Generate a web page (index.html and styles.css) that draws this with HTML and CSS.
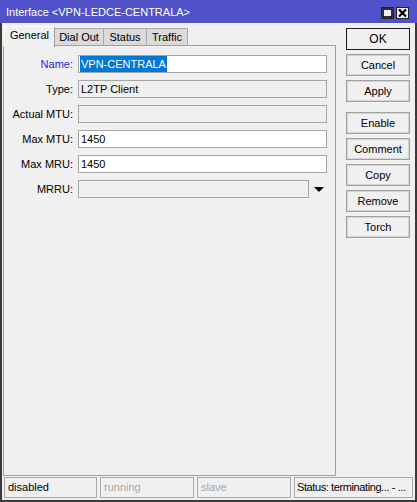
FILE: index.html
```html
<!DOCTYPE html>
<html>
<head>
<meta charset="utf-8">
<link rel="stylesheet" href="styles.css">
</head>
<body>
<div class="window">
  <div class="titlebar">
    <span class="title">Interface &lt;VPN-LEDCE-CENTRALA&gt;</span>
    <div class="tb-btns">
      <span class="tb-btn"><svg width="11" height="10" viewBox="0 0 11 10"><rect x="1" y="1" width="9" height="8" fill="none" stroke="#000" stroke-width="1.6"/></svg></span>
      <span class="tb-btn"><svg width="11" height="10" viewBox="0 0 11 10"><path d="M2 1.5 L9 8.5 M9 1.5 L2 8.5" stroke="#000" stroke-width="2.2"/></svg></span>
    </div>
  </div>
  <div class="main">
    <div class="left">
      <div class="tabs">
        <div class="tab active w-general">General</div>
        <div class="tab w-dial">Dial Out</div>
        <div class="tab w-status">Status</div>
        <div class="tab w-traffic">Traffic</div>
        <div class="tab-fill"></div>
      </div>
      <div class="panel">
        <div class="row">
          <div class="label blue">Name:</div>
          <div class="field white"><span class="sel">VPN-CENTRALA</span></div>
        </div>
        <div class="row">
          <div class="label">Type:</div>
          <div class="field">L2TP Client</div>
        </div>
        <div class="row">
          <div class="label">Actual MTU:</div>
          <div class="field"></div>
        </div>
        <div class="row">
          <div class="label">Max MTU:</div>
          <div class="field white">1450</div>
        </div>
        <div class="row">
          <div class="label">Max MRU:</div>
          <div class="field white">1450</div>
        </div>
        <div class="row">
          <div class="label">MRRU:</div>
          <div class="field short"></div>
          <span class="arrow"></span>
        </div>
      </div>
    </div>
    <div class="buttons">
      <div class="btn default">OK</div>
      <div class="btn">Cancel</div>
      <div class="btn">Apply</div>
      <div class="btn sep">Enable</div>
      <div class="btn">Comment</div>
      <div class="btn">Copy</div>
      <div class="btn">Remove</div>
      <div class="btn">Torch</div>
    </div>
  </div>
  <div class="statusbar">
    <div class="seg s1">disabled</div>
    <div class="seg s2 dim">running</div>
    <div class="seg s3 dim">slave</div>
    <div class="seg s4">Status: terminating... - ...</div>
  </div>
</div>
</body>
</html>
```
FILE: styles.css
```css
* { box-sizing: border-box; }
html, body { margin: 0; padding: 0; }
body {
  font-family: "Liberation Sans", Arial, sans-serif;
  font-size: 11px;
  color: #000;
  background: #f0f0f0;
}
.window {
  width: 417px;
  height: 502px;
  border: 2px solid #3a3a3a;
  border-top: 0;
  background: #f0f0f0;
  display: flex;
  flex-direction: column;
}
.titlebar {
  height: 23px;
  margin: 0 -2px;
  background: #5151c9;
  display: flex;
  align-items: center;
  padding-left: 6px;
  padding-right: 8px;
}
.title {
  color: #fff;
  font-size: 11px;
  flex: 1;
  padding-top: 1px;
}
.tb-btns {
  display: flex;
  gap: 2px;
  margin-top: 2px;
}
.tb-btn {
  width: 13px;
  height: 12px;
  background: #f0f0f0;
  border: 1px solid #222;
  display: flex;
  align-items: center;
  justify-content: center;
}
.tb-btn svg { display: block; }
.main {
  height: 453px;
  display: flex;
  padding-top: 3px;
}
.left {
  width: 333px;
  margin-left: 1px;
  display: flex;
  flex-direction: column;
}
.tabs {
  height: 20px;
  display: flex;
  align-items: flex-end;
  padding-left: 1px;
}
.tab {
  height: 18px;
  background: #dadada;
  border: 1px solid #a8a8a8;
  border-bottom: 1px solid #a0a0a0;
  border-left: 0;
  text-align: center;
  line-height: 16px;
}
.tab.active {
  background: #f0f0f0;
  border: 1px solid #a0a0a0;
  border-left: 1px solid #fff;
  border-top: 1px solid #fff;
  border-bottom: 0;
  line-height: 17px;
  position: relative;
  z-index: 1;
  margin-bottom: -1px;
  height: 21px;
}
.w-general { width: 51px; }
.w-dial { width: 49px; }
.w-status { width: 43px; }
.w-traffic { width: 41px; }
.tab-fill {
  flex: 1;
  border-bottom: 1px solid #a0a0a0;
}
.panel {
  flex: 1;
  border: 1px solid #a0a0a0;
  border-top: 0;
  padding-top: 9px;
  display: flex;
  flex-direction: column;
  gap: 7px;
}
.row {
  display: flex;
  align-items: center;
  height: 18px;
}
.label {
  width: 69px;
  text-align: right;
  margin-right: 5px;
}
.blue { color: #2222e2; }
.field {
  width: 249px;
  height: 18px;
  border: 1px solid #a6a6a6;
  background: #f0f0f0;
  padding-left: 2px;
  line-height: 16px;
  white-space: nowrap;
  overflow: hidden;
}
.field.white { background: #fff; }
.field.short { width: 231px; }
.sel {
  background: #0078d7;
  color: #fff;
  display: inline-block;
  height: 16px;
  margin-left: -1px;
  padding: 0 1px;
}
.arrow {
  width: 0;
  height: 0;
  margin-left: 5px;
  border-left: 5px solid transparent;
  border-right: 5px solid transparent;
  border-top: 5px solid #000;
}
.buttons {
  width: 64px;
  margin-left: 10px;
  padding-top: 2px;
  display: flex;
  flex-direction: column;
  gap: 4px;
}
.btn {
  height: 22px;
  border: 1px solid #a0a0a0;
  box-shadow: inset 0 0 0 1px #d4d4d4;
  background: #f0f0f0;
  text-align: center;
  line-height: 20px;
  font-size: 11px;
}
.btn.default {
  border: 1px solid #1a1a1a;
  box-shadow: inset 0 0 0 1px #f0f0f0;
  font-size: 12px;
}
.btn.sep { margin-top: 6px; }
.statusbar {
  margin-top: 1px;
  height: 21px;
  display: flex;
  gap: 3px;
  padding-left: 2px;
}
.seg {
  height: 21px;
  border: 1px solid #a8a8a8;
  line-height: 19px;
  padding-left: 3px;
  white-space: nowrap;
  overflow: hidden;
}
.s1 { width: 93px; }
.s2 { width: 94px; }
.s3 { width: 94px; }
.s4 { width: 119px; letter-spacing: -0.4px; padding-left: 2px; }
.dim { color: #a9a9a9; }
```
